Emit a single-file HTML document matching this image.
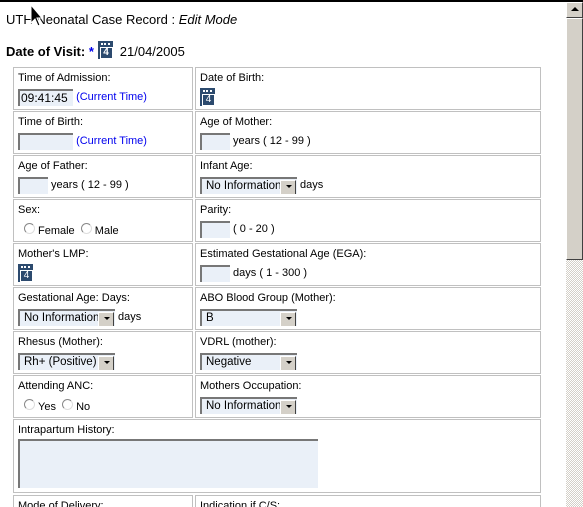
<!DOCTYPE html>
<html><head><meta charset="utf-8"><style>
*{margin:0;padding:0;box-sizing:border-box}
html,body{width:583px;height:507px;overflow:hidden}
body{background:#fff;font-family:"Liberation Sans",sans-serif;font-size:11px;color:#000;position:relative}
.top{position:absolute;left:0;top:0;width:583px;height:2px;background:#000}
.h1{position:absolute;left:6px;top:12px;font-size:13px}
.h2{position:absolute;left:6px;top:41px;font-size:13px;font-weight:bold}
.c{position:absolute;border:1px solid #c0c0c0;height:43px}
.L{left:13px;width:180px}.R{left:195px;width:346px}
.lb{position:absolute;left:4px;top:4px;white-space:nowrap}
.ln{position:absolute;left:4px;top:20px;white-space:nowrap;display:flex;align-items:center;height:18px}
.in{display:inline-block;width:55px;height:17px;background:#eaf0f8;border-top:2px solid #777;border-left:2px solid #777;font-size:12px;line-height:15px;padding-left:1px}
.sel{display:inline-block;width:97px;height:17px;background:#eaf0f8;border-top:2px solid #777;border-left:2px solid #777;position:relative;line-height:15px;padding-left:4px;font-size:11.5px;overflow:hidden}
.sel:after{content:"";position:absolute;right:1px;top:1px;width:14px;height:13px;background:#d4d0c8;border:1px solid;border-color:#fff #404040 #404040 #fff}
.sel:before{content:"";position:absolute;right:5px;top:6px;border:3px solid transparent;border-top:3px solid #000;z-index:2}
.blue{color:#0000ee}
.cal{display:inline-block;width:15px;height:18px;background:#2c4a6e;position:relative}
.cal:after{content:"4";position:absolute;left:2px;top:6px;width:11px;height:10px;border:1px solid #fff;color:#fff;font-size:10px;line-height:9px;text-align:center}
.cal:before{content:"";position:absolute;left:3px;top:2px;width:9px;height:3px;border-top:2px dotted #fff}
.rad{display:inline-block;width:11px;height:11px;border-radius:50%;border:1px solid #888;border-right-color:#ddd;border-bottom-color:#ddd;background:#fff;margin-right:3px;position:relative;top:-3px}
.sb{position:absolute;left:566px;top:2px;width:17px;height:505px;background:repeating-conic-gradient(#d4d0c8 0 25%,#fff 0 50%) 0 0/2px 2px}
.btn{position:absolute;left:0;width:17px;background:#d4d0c8;border:1px solid;border-color:#fff #404040 #404040 #fff}
</style></head><body>
<div class="top"></div>
<div class="h1">UTH Neonatal Case Record : <i>Edit Mode</i></div>
<div class="h2">Date of Visit: <span class="blue">*</span> <span class="cal" style="vertical-align:-3px"></span> &nbsp;<span style="font-weight:normal">21/04/2005</span></div>

<div class="c L" style="top:67px"><div class="lb">Time of Admission:</div><div class="ln"><span class="in">09:41:45</span>&nbsp;<span class="blue">(Current Time)</span></div></div>
<div class="c R" style="top:67px"><div class="lb">Date of Birth:</div><div class="ln"><span class="cal"></span></div></div>

<div class="c L" style="top:111px"><div class="lb">Time of Birth:</div><div class="ln"><span class="in"></span>&nbsp;<span class="blue">(Current Time)</span></div></div>
<div class="c R" style="top:111px"><div class="lb">Age of Mother:</div><div class="ln"><span class="in" style="width:30px"></span>&nbsp;years ( 12 - 99 )</div></div>

<div class="c L" style="top:155px"><div class="lb">Age of Father:</div><div class="ln"><span class="in" style="width:30px"></span>&nbsp;years ( 12 - 99 )</div></div>
<div class="c R" style="top:155px"><div class="lb">Infant Age:</div><div class="ln"><span class="sel">No Information</span>&nbsp;days</div></div>

<div class="c L" style="top:199px"><div class="lb">Sex:</div><div class="ln" style="left:10px;top:22px"><span class="rad"></span>Female&nbsp;&nbsp;<span class="rad"></span>Male</div></div>
<div class="c R" style="top:199px"><div class="lb">Parity:</div><div class="ln"><span class="in" style="width:30px"></span>&nbsp;( 0 - 20 )</div></div>

<div class="c L" style="top:243px"><div class="lb">Mother's LMP:</div><div class="ln"><span class="cal"></span></div></div>
<div class="c R" style="top:243px"><div class="lb">Estimated Gestational Age (EGA):</div><div class="ln"><span class="in" style="width:30px"></span>&nbsp;days ( 1 - 300 )</div></div>

<div class="c L" style="top:287px"><div class="lb">Gestational Age: Days:</div><div class="ln"><span class="sel">No Information</span>&nbsp;days</div></div>
<div class="c R" style="top:287px"><div class="lb">ABO Blood Group (Mother):</div><div class="ln"><span class="sel">B</span></div></div>

<div class="c L" style="top:331px"><div class="lb">Rhesus (Mother):</div><div class="ln"><span class="sel">Rh+ (Positive)</span></div></div>
<div class="c R" style="top:331px"><div class="lb">VDRL (mother):</div><div class="ln"><span class="sel">Negative</span></div></div>

<div class="c L" style="top:375px"><div class="lb">Attending ANC:</div><div class="ln" style="left:10px;top:22px"><span class="rad"></span>Yes&nbsp;&nbsp;<span class="rad"></span>No</div></div>
<div class="c R" style="top:375px"><div class="lb">Mothers Occupation:</div><div class="ln"><span class="sel">No Information</span></div></div>

<div class="c" style="top:419px;left:13px;width:528px;height:74px"><div class="lb">Intrapartum History:</div><div style="position:absolute;left:4px;top:19px;width:300px;height:49px;background:#eaf0f8;border-top:2px solid #777;border-left:2px solid #777"></div></div>

<div class="c L" style="top:495px;height:12px;border-bottom:0;overflow:hidden"><div class="lb">Mode of Delivery:</div></div>
<div class="c R" style="top:495px;height:12px;border-bottom:0;overflow:hidden"><div class="lb">Indication if C/S:</div></div>

<div class="sb">
<div class="btn" style="top:0;height:16px"><div style="position:absolute;left:4px;top:4px;border:4px solid transparent;border-bottom:4px solid #000;border-top:0"></div></div>
<div class="btn" style="top:16px;height:242px"></div>
</div>
<svg style="position:absolute;left:30px;top:4px" width="14" height="24" viewBox="0 0 14 24"><path d="M1 1 L1 19 L5 15 L8 22 L10 21 L7 14 L12 14 Z" fill="#000" stroke="#fff" stroke-width="1"/></svg>
</body></html>
